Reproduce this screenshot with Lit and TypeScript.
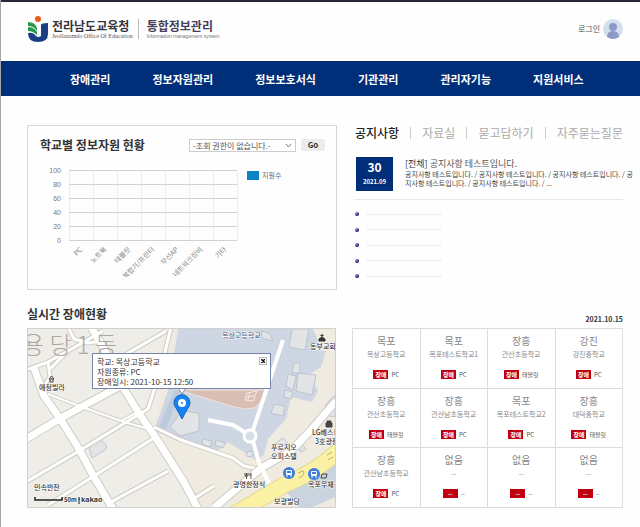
import { LitElement, html, svg, css } from "lit";
import { customElement } from "lit/decorators.js";

const MENU = ["장애관리", "정보자원관리", "정보보호서식", "기관관리", "관리자기능", "지원서비스"];
const TABS = ["공지사항", "자료실", "묻고답하기", "자주묻는질문"];
const CATEGORIES = ["PC", "노트북", "태블릿", "복합기/프린터", "무선AP", "네트워크장비", "기타"];
const TICKS = [100, 80, 60, 40, 20, 0];

interface Fault {
  city: string;
  school: string;
  badge: string;
  kind: string;
}
const fault = (city: string, school: string, kind: string, badge = "장애"): Fault => ({ city, school, badge, kind });
const FAULTS: Fault[] = [
  fault("목포", "목상고등학교", "PC"),
  fault("목포", "목포테스트학교1", "PC"),
  fault("장흥", "관산초등학교", "태블릿"),
  fault("강진", "강진중학교", "PC"),
  fault("장흥", "관산초등학교", "태블릿"),
  fault("장흥", "관산남초등학교", "PC"),
  fault("목포", "목포테스트학교2", "PC"),
  fault("장흥", "대덕중학교", "태블릿"),
  fault("장흥", "관산남초등학교", "PC"),
  fault("없음", "--", "--", "--"),
  fault("없음", "--", "--", "--"),
  fault("없음", "--", "--", "--"),
];

const base = css`
  * { box-sizing: border-box; }
  h1, h2, h3, p, ul, ol { margin: 0; padding: 0; }
  ul, ol { list-style: none; }
  a { color: inherit; text-decoration: none; }
  button, select { font-family: inherit; margin: 0; }
  svg { display: block; }
`;

@customElement("site-header")
class SiteHeader extends LitElement {
  static styles = [base, css`
    :host { display: block; }
    .top { display: flex; align-items: center; justify-content: space-between; height: 61px; padding: 0 17px 6px 26px; border-top: 2px solid #2b2637; }
    .brand { display: flex; align-items: center; }
    .logo { width: 22px; height: 28px; margin-right: 3px; }
    .name { display: flex; flex-direction: column; white-space: nowrap; }
    .ko { font-size: 12px; line-height: 14px; font-weight: 700; color: #33333c; }
    .en { font: 6px/6px "Liberation Serif", serif; color: #555; }
    .sys { margin-left: 5px; padding-left: 8px; border-left: 1px solid #bbb; }
    .sys .ko { color: #45405a; }
    .sys .en { font: 5px/6px "Liberation Sans", sans-serif; color: #777; }
    .login { display: flex; align-items: center; gap: 3px; font-size: 8px; color: #555; }
    nav { background: #002e78; }
    .menu { display: flex; align-items: center; gap: 42px; height: 35px; padding-left: 69px; font-size: 11px; font-weight: 700; color: #fff; white-space: nowrap; }
  `];
  render() {
    return html`
      <header class="top">
        <div class="brand">
          <svg class="logo" viewBox="0 0 22 28" aria-hidden="true">
            <circle cx="11" cy="4" r="3" fill="#ee5a1c" />
            <path d="M1 7 Q8 7 10 13 V16 Q7 11 1 11Z" fill="#259a49" />
            <path d="M1 12 Q7 12 10 17 V20 Q6 16 1 16Z" fill="#259a49" />
            <path d="M1 18 Q6 17 9 21 Q11 23 14 21 V10 Q14 8 21 8 V19 Q21 27 11 27 Q1 27 1 18Z" fill="#1c3f83" />
          </svg>
          <div class="name">
            <span class="ko">전라남도교육청</span>
            <span class="en">Jeollanamdo Office Of Education</span>
          </div>
          <div class="name sys">
            <span class="ko">통합정보관리</span>
            <span class="en">Information management system</span>
          </div>
        </div>
        <a class="login" href="#">로그인
          <svg width="20" height="20" viewBox="0 0 20 20" aria-hidden="true">
            <circle cx="10" cy="10" r="10" fill="#d2e0ee" />
            <circle cx="10" cy="8" r="4" fill="#8d9bc9" />
            <path d="M4 18 Q4 12 10 12 Q16 12 16 18 Q10 22 4 18Z" fill="#8d9bc9" />
          </svg>
        </a>
      </header>
      <nav><ul class="menu">${MENU.map((m) => html`<li><a href="#">${m}</a></li>`)}</ul></nav>
    `;
  }
}

@customElement("asset-chart")
class AssetChart extends LitElement {
  static styles = [base, css`
    :host { display: block; border: 1px solid #d6d6d6; padding: 10px 11px 12px 12px; }
    .head { display: flex; align-items: center; height: 18px; margin-bottom: 6px; }
    h2 { font-size: 12px; line-height: 18px; color: #333; white-space: nowrap; margin-right: auto; }
    .pick { position: relative; display: flex; }
    select { appearance: none; height: 13px; width: 107px; padding: 0 0 0 3px; border: 1px solid #ccc; border-radius: 0; background: #fff; color: #555; font-size: 8px; line-height: 11px; }
    .arrow { position: absolute; right: 4px; top: 4px; pointer-events: none; }
    button { margin-left: 5px; width: 24px; height: 12px; padding: 0; border: 0; border-radius: 2px; background: #ececec; color: #333; font-size: 8px; line-height: 12px; font-weight: 700; }
    .chart { width: 100%; overflow: hidden; }
    .axis { font: 7px "Liberation Sans", "Noto Sans CJK KR", sans-serif; fill: #777; }
    .cat { font-size: 7px; fill: #888; }
    .legend { font-size: 7px; fill: #666; }
    .grid { stroke: #d2d2d2; }
    .vgrid { stroke: #ececec; }
  `];
  render() {
    const step = 24;
    const left = 29;
    const right = left + step * CATEGORIES.length;
    return html`
      <div class="head">
        <h2>학교별 정보자원 현황</h2>
        <div class="pick">
          <select aria-label="학교 선택"><option>-조회 권한이 없습니다.-</option></select>
          <svg class="arrow" width="7" height="5" viewBox="0 0 7 5"><path d="M1 1 L3.5 4 L6 1" fill="none" stroke="#777" /></svg>
        </div>
        <button type="button">Go</button>
      </div>
      <svg class="chart" viewBox="0 0 285 117">
        ${[0, ...CATEGORIES].map((_, i) => svg`<path class="vgrid" d="M${left + step * i}.5 10 V80" />`)}
        ${TICKS.map((t, i) => svg`
          <path class="grid" d="M${left} ${10 + 14 * i}.5 H${right}" />
          <text class="axis" x="21" y=${13 + 14 * i} text-anchor="end">${t}</text>`)}
        ${CATEGORIES.map((c, i) => svg`<text class="cat" text-anchor="end" transform="translate(${left + step * i + 14} 90) rotate(-45)">${c}</text>`)}
        <rect x="207" y="11" width="12" height="9" fill="#0a83c4" />
        <text class="legend" x="222" y="18">지원수</text>
      </svg>
    `;
  }
}

@customElement("notice-board")
class NoticeBoard extends LitElement {
  static styles = [base, css`
    :host { display: flex; flex-direction: column; min-width: 0; }
    .tabs { display: flex; justify-content: space-between; align-items: center; height: 16px; font-size: 12px; line-height: 16px; color: #aaa; white-space: nowrap; }
    .tabs .on { color: #222; font-weight: 500; }
    .sep { width: 1px; height: 12px; background: #ccc; }
    .post { display: flex; gap: 12px; padding: 16px 0 8px 1px; border-bottom: 1px solid #e6e6e6; }
    .date { flex: none; width: 37px; height: 34px; background: #002e78; color: #fff; text-align: center; font-weight: 700; }
    .day { display: block; font-size: 12px; line-height: 20px; }
    .month { display: block; font-size: 6px; line-height: 10px; }
    h3 { font-size: 9px; line-height: 13px; font-weight: 400; color: #555; }
    .all { color: #333; }
    .body { font-size: 7px; line-height: 9px; color: #444; white-space: nowrap; }
    .list { flex: 1; display: flex; flex-direction: column; justify-content: space-between; padding: 12px 0; }
    .item { display: flex; align-items: center; gap: 8px; height: 4px; }
    .dot { width: 4px; height: 4px; border-radius: 50%; background: radial-gradient(circle at 30% 30%, #a9a4d8, #2a1a70 60%); }
    .line { width: 74px; border-top: 1px dotted #ddd; }
  `];
  render() {
    return html`
      <nav class="tabs">
        ${TABS.map((t, i) => html`${i ? html`<span class="sep"></span>` : ""}<a class=${i ? "" : "on"} href="#">${t}</a>`)}
      </nav>
      <article class="post">
        <time class="date" datetime="2021-09-30"><span class="day">30</span><span class="month">2021.09</span></time>
        <div>
          <h3><span class="all">[전체]</span> 공지사항 테스트입니다.</h3>
          <p class="body">공지사항 테스트입니다. / 공지사항 테스트입니다. / 공지사항 테스트입니다. / 공<br />지사항 테스트입니다. / 공지사항 테스트입니다. / ...</p>
        </div>
      </article>
      <ul class="list">
        ${[1, 2, 3, 4, 5].map(() => html`<li class="item"><span class="dot"></span><span class="line"></span></li>`)}
      </ul>
    `;
  }
}

const WIDE_ROADS = [
  "M-2 110 L33 89 L68 70 L98 54",
  "M63 -2 L74 16 L96 60 L112 86 L126 106 L156 153 L170 180",
  "M6 39 L16 67 L33 91 L51 120 L66 148 L85 180",
  "M186 179 L233 139 L263 122 L284 100 L308 72",
];
const ROADS = [
  "M-2 41 L20 33 L40 22 L75 2",
  "M40 -2 L46 10 L60 14 L74 12",
  "M20 33 L22 48 L14 60",
  "M40 22 L22 40",
  "M51 122 L100 92 L120 80 L133 40 L143 -2",
  "M74 44 L100 24 L138 2",
  "M66 147 L126 109",
  "M-2 153 L51 122",
  "M20 176 L66 147",
  "M83 173 L140 142",
  "M126 98 L153 111 L205 129 L216 137 L226 139",
  "M165 170 L186 157",
];
const PATHS = ["M20 65 L46 75 L93 92 L117 99", "M93 92 L108 84"];
const CAMPUS_ROADS = ["M255 11 L238 62 L224 104", "M180 91 L205 96 L218 104", "M225 112 L231 134 L243 158"];
const BUILDINGS = [
  "M61 119 L72 110 L79 117 L77 121 L64 129Z",
  "M233 2 L241 4 L245 12 L234 9Z",
  "M264 0 H281 L277 21 L261 18Z",
  "M266 34 H272 V44 H264Z",
  "M260 45 L268 47 L265 61 L258 57Z",
  "M257 61 L265 63 L263 70 L256 68Z",
  "M246 75 L257 77 L255 87 L243 84Z",
  "M270 44 L288 46 L284 66 L268 62Z",
  "M154 82 L171 84 V102 L152 107 L142 98Z",
  "M175 110 L184 112 L182 118 L174 115Z",
  "M188 111 L197 114 L195 119 L187 116Z",
  "M220 122 L226 123 L223 128 L218 127Z",
  "M248 114 L255 109 L262 116 L254 121Z",
  "M273 114 L278 120 L273 123 L270 118Z",
  "M298 75 L307 66 V88 L296 86Z",
];
const LABELS: [string, number, number][] = [
  ["동부교회", 282, 20],
  ["애정빌라", 11, 61],
  ["민속반찬", 6, 161],
  ["LG베스트", 284, 106],
  ["3호광장", 287, 115],
  ["푸르지오", 243, 121],
  ["오피스텔", 243, 130],
  ["광명한정식", 205, 158],
  ["보광빌딩", 246, 175],
  ["목포우체국", 280, 158],
];

@customElement("fault-map")
class FaultMap extends LitElement {
  static styles = [base, css`
    :host { display: block; position: relative; border: 1px solid #d0d0d0; }
    .map { width: 100%; overflow: hidden; }
    .edge { fill: none; stroke: #cfccc5; stroke-linejoin: round; }
    .road { fill: none; stroke: #fff; stroke-linejoin: round; }
    .w9 { stroke-width: 9px; } .w7 { stroke-width: 7px; } .w5 { stroke-width: 5px; } .w4 { stroke-width: 4px; }
    .w3 { stroke-width: 3px; } .w2 { stroke-width: 2px; }
    .building { fill: #e2e4e6; stroke: #bcc5cf; }
    .label { font-size: 7px; font-weight: 500; fill: #333; paint-order: stroke; stroke: #fff; stroke-width: 1px; }
    .school { fill: #4d6283; }
    .scale { font-size: 6px; font-weight: 700; }
    .kakao { font-family: "Noto Sans", sans-serif; font-weight: 700; }
    .district { font-size: 24px; font-weight: 300; fill: #aaa7a2; }
    .popup { position: absolute; left: 64px; top: 24px; width: 179px; height: 36px; padding: 3px 4px 0; border: 1px solid #7683a8; background: #fff; font-size: 8px; line-height: 10px; color: #333; white-space: nowrap; }
    .close { position: absolute; right: 3px; top: 3px; width: 8px; height: 8px; padding: 0; border: 1px solid #bbb; background: #fff; display: flex; align-items: center; justify-content: center; }
  `];
  render() {
    return html`
      <svg class="map" viewBox="0 0 307 178" role="img" aria-label="장애 위치 지도">
        <rect width="307" height="178" fill="#efede7" />
        <path d="M140 0 H307 V178 H168 L126 104Z" fill="#f0ebe1" />
        <path d="M150 0 H285 L290 12 L282 45 L290 62 L284 73 L263 68 L258 90 L240 110 L236 126 L228 131 L200 113 L188 123 L126 102 L140 62Z" fill="#cdd6e2" />
        <path d="M282 20 L298 22 L293 38 L282 45Z" fill="#cdd6e2" />
        <path d="M130 100 L146 62 H152 L138 101Z" fill="#bccbdc" />
        <path d="M150 61 H237 Q234 80 219 80 Q211 80 190 73Z" fill="#d9bfb3" stroke="#eee4df" />
        <path d="M219 64 L229 62 L225 72 L217 71Z M222 63 L220 71 M218 68 L226 67" fill="none" stroke="#f4ebe6" />
        <path d="M258 162 L307 130 V168 L285 178 H270Z" fill="#c9d4df" />
        ${BUILDINGS.map((d) => svg`<path class="building" d=${d} />`)}
        ${WIDE_ROADS.map((d) => svg`<path class="edge w9" d=${d} />`)}
        ${ROADS.map((d) => svg`<path class="edge w5" d=${d} />`)}
        ${PATHS.map((d) => svg`<path class="edge w4" d=${d} />`)}
        ${WIDE_ROADS.map((d) => svg`<path class="road w7" d=${d} />`)}
        ${ROADS.map((d) => svg`<path class="road w3" d=${d} />`)}
        ${PATHS.map((d) => svg`<path class="road w2" d=${d} />`)}
        ${CAMPUS_ROADS.map((d) => svg`<path class="road w4" d=${d} />`)}
        <circle cx="222" cy="107" r="6" fill="#d7dfe7" stroke="#fff" stroke-width="3" />
        <path d="M205 186 L256 156 Q290 142 312 120" fill="none" stroke="#e2d993" stroke-width="17" />
        <path d="M205 186 L256 156 Q290 142 312 120" fill="none" stroke="#fbf1a5" stroke-width="15" />
        <path d="M270 144 L275 142 Q278 146 271 149 M299 126 L304 123 M300 131 L305 128" fill="none" stroke="#b9ad74" stroke-width="1" />

        <text class="district" x="-6" y="25">용 당 1 동</text>
        <text class="label school" x="194" y="9">목상고등학교</text>
        ${LABELS.map(([t, x, y]) => svg`<text class="label" x=${x} y=${y}>${t}</text>`)}
        <text class="label scale" x="36" y="173">50m</text>
        <text class="label kakao" x="53" y="173">kakao</text>
        <path d="M51 168 V175 M51 170 H52" fill="none" stroke="#222" />
        <path d="M7 168 V171 H34 V168" fill="none" stroke="#222" stroke-width="1.5" />

        <path d="M294 5 V8 M292.500 6.500 H295.500 M291 12 V10 L294 8 L297 10 V12Z" fill="#333" stroke="#333" />
        <path d="M21 50 L23.500 47 L26 50Z M22 50 V53 H25 V50" fill="none" stroke="#444" />
        <path d="M298 94 H304 V98 H298Z M299 94 V92 H303 V94" fill="#444" stroke="#444" />
        <path d="M217 144 V147 H220 V144 M218.500 144 V150 M223 150 V144 Q221 145 222 147" fill="none" stroke="#554" />
        <path d="M294 145 H299 L298 149 H293Z" fill="none" stroke="#444" />
        ${[[261, 144], [286, 145]].map(([x, y]) => svg`
          <g transform="translate(${x} ${y})">
            <circle r="6" fill="#3b7ddd" />
            <rect x="-3" y="-3" width="6" height="5" rx="1" fill="#fff" />
            <rect x="-2" y="-2" width="4" height="2" fill="#3b7ddd" />
            <path d="M-2 2 V4 M2 2 V4" stroke="#fff" />
          </g>`)}
        <path d="M154 90 Q151 84 148 79 A8 8 0 1 1 160 79 Q157 84 154 90Z" fill="#1482f0" stroke="#0d62c4" />
        <circle cx="154" cy="74" r="4" fill="#fff" />
        <circle cx="154" cy="74" r="1" fill="#1482f0" />
        <path d="M150 59 L154 65 L158 59" fill="#fff" stroke="#7683a8" />
      </svg>
      <div class="popup">
        <p>학교: 목상고등학교</p>
        <p>자원종류: PC</p>
        <p>장애일시: 2021-10-15 12:50</p>
        <button class="close" type="button" aria-label="닫기">
          <svg width="4" height="4" viewBox="0 0 4 4"><path d="M0 0 L4 4 M4 0 L0 4" stroke="#111" stroke-width="1.500" /></svg>
        </button>
      </div>
    `;
  }
}

@customElement("fault-grid")
class FaultGrid extends LitElement {
  static styles = [base, css`
    :host { display: block; min-width: 0; }
    .cells { display: grid; grid-template-columns: repeat(4, minmax(0, 1fr)); grid-auto-rows: 1fr; height: 100%; gap: 1px; padding: 1px; background: #dcdcdc; }
    .cell { background: #fff; text-align: center; padding-top: 4px; white-space: nowrap; }
    .city { font-size: 10px; line-height: 15px; font-weight: 400; color: #888; }
    .school { font-size: 7px; line-height: 12px; color: #888; }
    .state { display: flex; justify-content: center; align-items: center; gap: 3px; margin-top: 10px; font-size: 6px; line-height: 9px; color: #555; }
    .badge { width: 15px; height: 9px; background: #c00010; color: #fff; font-weight: 700; }
  `];
  render() {
    return html`<ul class="cells">${FAULTS.map((f) => html`
      <li class="cell">
        <h3 class="city">${f.city}</h3>
        <p class="school">${f.school}</p>
        <p class="state"><span class="badge">${f.badge}</span><span>${f.kind}</span></p>
      </li>`)}</ul>`;
  }
}

@customElement("app-root")
class AppRoot extends LitElement {
  static styles = [base, css`
    :host { display: block; min-height: 100vh; box-sizing: border-box; border-left: 1px solid #a5a5a8; background: #fefefe; color: #333; font-family: "Noto Sans CJK KR", "Noto Sans", sans-serif; }
    main { padding: 29px 17px 18px 26px; }
    .row { display: grid; grid-template-columns: minmax(0, 310fr) minmax(0, 268fr); gap: 18px; }
    .wide { grid-template-columns: minmax(0, 309fr) minmax(0, 271fr); gap: 16px; }
    .title { display: flex; align-items: center; justify-content: space-between; height: 20px; margin: 14px 0 4px; }
    h2 { font-size: 12px; line-height: 20px; color: #333; }
    .today { font-size: 7px; font-weight: 700; color: #333; padding-top: 10px; }
  `];
  render() {
    return html`
      <site-header></site-header>
      <main>
        <section class="row">
          <asset-chart></asset-chart>
          <notice-board></notice-board>
        </section>
        <section>
          <div class="title"><h2>실시간 장애현황</h2><time class="today">2021.10.15</time></div>
          <div class="row wide">
            <fault-map></fault-map>
            <fault-grid></fault-grid>
          </div>
        </section>
      </main>
    `;
  }
}
